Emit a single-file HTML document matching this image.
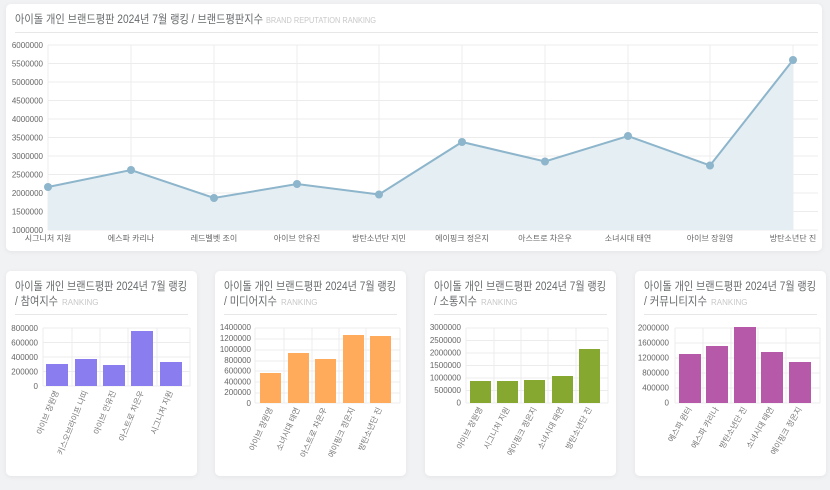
<!DOCTYPE html>
<html><head><meta charset="utf-8"><style>
html,body{margin:0;padding:0;background:#f1f2f4;width:830px;height:490px;overflow:hidden}
svg{display:block}
text{font-family:"Liberation Sans","Noto Sans CJK KR",sans-serif}
.t{font-size:11.5px;fill:#676a6c}
.s{font-size:8px;fill:#c8c8c8}
.y{font-size:8px;fill:#666;text-anchor:end}
.x{font-size:8px;fill:#666;text-anchor:middle}
.r{font-size:8px;fill:#777;text-anchor:end}
.g{stroke:#ececec;stroke-width:1}
</style></head><body>
<svg width="830" height="490" xmlns="http://www.w3.org/2000/svg">
<defs><filter id="sh" x="-5%" y="-5%" width="110%" height="110%"><feDropShadow dx="0" dy="1" stdDeviation="2" flood-color="#000" flood-opacity="0.06"/></filter></defs>
<rect x="6" y="4" width="816" height="247" rx="5" fill="#fff" filter="url(#sh)"/>
<rect x="6" y="271" width="191" height="205" rx="5" fill="#fff" filter="url(#sh)"/>
<rect x="215" y="271" width="191" height="205" rx="5" fill="#fff" filter="url(#sh)"/>
<rect x="425" y="271" width="191" height="205" rx="5" fill="#fff" filter="url(#sh)"/>
<rect x="635" y="271" width="191" height="205" rx="5" fill="#fff" filter="url(#sh)"/>

<text x="15" y="23" class="t" textLength="248" lengthAdjust="spacingAndGlyphs">아이돌 개인 브랜드평판 2024년 7월 랭킹 / 브랜드평판지수</text>
<text x="266" y="23" class="s" textLength="110" lengthAdjust="spacingAndGlyphs">BRAND REPUTATION RANKING</text>
<line x1="15" y1="32.5" x2="818" y2="32.5" stroke="#e7e7e7"/>
<g class="g">
<line x1="48" y1="45" x2="818" y2="45"/><line x1="48" y1="63.5" x2="818" y2="63.5"/><line x1="48" y1="82" x2="818" y2="82"/><line x1="48" y1="100.5" x2="818" y2="100.5"/><line x1="48" y1="119" x2="818" y2="119"/><line x1="48" y1="137.5" x2="818" y2="137.5"/><line x1="48" y1="156" x2="818" y2="156"/><line x1="48" y1="174.5" x2="818" y2="174.5"/><line x1="48" y1="193" x2="818" y2="193"/><line x1="48" y1="211.5" x2="818" y2="211.5"/><line x1="48" y1="230" x2="818" y2="230"/>
<line x1="48" y1="45" x2="48" y2="230"/><line x1="131" y1="45" x2="131" y2="230"/><line x1="214" y1="45" x2="214" y2="230"/><line x1="297" y1="45" x2="297" y2="230"/><line x1="379" y1="45" x2="379" y2="230"/><line x1="462" y1="45" x2="462" y2="230"/><line x1="545" y1="45" x2="545" y2="230"/><line x1="628" y1="45" x2="628" y2="230"/><line x1="710" y1="45" x2="710" y2="230"/><line x1="793" y1="45" x2="793" y2="230"/>
</g>
<g>
<text x="43" y="48" class="y">6000000</text><text x="43" y="66.5" class="y">5500000</text><text x="43" y="85" class="y">5000000</text><text x="43" y="103.5" class="y">4500000</text><text x="43" y="122" class="y">4000000</text><text x="43" y="140.5" class="y">3500000</text><text x="43" y="159" class="y">3000000</text><text x="43" y="177.5" class="y">2500000</text><text x="43" y="196" class="y">2000000</text><text x="43" y="214.5" class="y">1500000</text><text x="43" y="233" class="y">1000000</text>
</g>
<polygon points="48,230 48,187 131,170 214,198 297,184 379,194.5 462,142 545,161.5 628,136 710,165.5 793,60 793,230" fill="#e5eef3"/>
<polyline points="48,187 131,170 214,198 297,184 379,194.5 462,142 545,161.5 628,136 710,165.5 793,60" fill="none" stroke="#8db5cb" stroke-width="2"/>
<g fill="#8db5cb">
<circle cx="48" cy="187" r="4"/><circle cx="131" cy="170" r="4"/><circle cx="214" cy="198" r="4"/><circle cx="297" cy="184" r="4"/><circle cx="379" cy="194.5" r="4"/><circle cx="462" cy="142" r="4"/><circle cx="545" cy="161.5" r="4"/><circle cx="628" cy="136" r="4"/><circle cx="710" cy="165.5" r="4"/><circle cx="793" cy="60" r="4"/>
</g>
<g>
<text x="48" y="241" class="x">시그니처 지원</text><text x="131" y="241" class="x">에스파 카리나</text><text x="214" y="241" class="x">레드벨벳 조이</text><text x="297" y="241" class="x">아이브 안유진</text><text x="379" y="241" class="x">방탄소년단 지민</text><text x="462" y="241" class="x">에이핑크 정은지</text><text x="545" y="241" class="x">아스트로 차은우</text><text x="628" y="241" class="x">소녀시대 태연</text><text x="710" y="241" class="x">아이브 장원영</text><text x="793" y="241" class="x">방탄소년단 진</text>
</g>

<!-- card1 -->
<text x="15" y="290" class="t" textLength="172" lengthAdjust="spacingAndGlyphs">아이돌 개인 브랜드평판 2024년 7월 랭킹</text>
<text x="15" y="305" class="t" textLength="43" lengthAdjust="spacingAndGlyphs">/ 참여지수</text><text x="62" y="305" class="s">RANKING</text>
<line x1="15" y1="314.5" x2="188" y2="314.5" stroke="#e7e7e7"/>
<g class="g"><line x1="43" y1="328" x2="190" y2="328"/><line x1="43" y1="342.5" x2="190" y2="342.5"/><line x1="43" y1="357" x2="190" y2="357"/><line x1="43" y1="371.5" x2="190" y2="371.5"/><line x1="43" y1="386" x2="190" y2="386"/><line x1="43" y1="328" x2="43" y2="386"/><line x1="72" y1="328" x2="72" y2="386"/><line x1="100" y1="328" x2="100" y2="386"/><line x1="128" y1="328" x2="128" y2="386"/><line x1="157" y1="328" x2="157" y2="386"/><line x1="190" y1="328" x2="190" y2="386"/></g>
<text x="38" y="331" class="y">800000</text><text x="38" y="345.5" class="y">600000</text><text x="38" y="360" class="y">400000</text><text x="38" y="374.5" class="y">200000</text><text x="38" y="389" class="y">0</text>
<g fill="#8a7df0"><rect x="46" y="364" width="22" height="22"/><rect x="75" y="359" width="22" height="27"/><rect x="103" y="365" width="22" height="21"/><rect x="131" y="331" width="22" height="55"/><rect x="160" y="362" width="22" height="24"/></g>
<text class="r" transform="translate(59,392) rotate(-68)">아이브 장원영</text>
<text class="r" transform="translate(88,392) rotate(-68)">키스오브라이프 나띠</text>
<text class="r" transform="translate(116,392) rotate(-68)">아이브 안유진</text>
<text class="r" transform="translate(144,392) rotate(-68)">아스트로 차은우</text>
<text class="r" transform="translate(173,392) rotate(-68)">시그니처 지원</text>

<!-- card2 -->
<text x="224" y="290" class="t" textLength="172" lengthAdjust="spacingAndGlyphs">아이돌 개인 브랜드평판 2024년 7월 랭킹</text>
<text x="224" y="305" class="t" textLength="53" lengthAdjust="spacingAndGlyphs">/ 미디어지수</text><text x="281" y="305" class="s">RANKING</text>
<line x1="224" y1="314.5" x2="397" y2="314.5" stroke="#e7e7e7"/>
<g class="g"><line x1="255" y1="328" x2="400" y2="328"/><line x1="255" y1="339" x2="400" y2="339"/><line x1="255" y1="350" x2="400" y2="350"/><line x1="255" y1="361" x2="400" y2="361"/><line x1="255" y1="371" x2="400" y2="371"/><line x1="255" y1="382" x2="400" y2="382"/><line x1="255" y1="393" x2="400" y2="393"/><line x1="255" y1="403" x2="400" y2="403"/><line x1="255" y1="328" x2="255" y2="403"/><line x1="284" y1="328" x2="284" y2="403"/><line x1="312" y1="328" x2="312" y2="403"/><line x1="339" y1="328" x2="339" y2="403"/><line x1="366" y1="328" x2="366" y2="403"/><line x1="400" y1="328" x2="400" y2="403"/></g>
<text x="251" y="330" class="y">1400000</text><text x="251" y="341" class="y">1200000</text><text x="251" y="352" class="y">1000000</text><text x="251" y="363" class="y">800000</text><text x="251" y="373.5" class="y">600000</text><text x="251" y="384.5" class="y">400000</text><text x="251" y="395" class="y">200000</text><text x="251" y="406" class="y">0</text>
<g fill="#ffab5b"><rect x="260" y="373" width="21" height="30"/><rect x="288" y="353" width="21" height="50"/><rect x="315" y="359" width="21" height="44"/><rect x="343" y="335" width="21" height="68"/><rect x="370" y="336" width="21" height="67"/></g>
<text class="r" transform="translate(273,409) rotate(-66)">아이브 장원영</text>
<text class="r" transform="translate(300,409) rotate(-66)">소녀시대 태연</text>
<text class="r" transform="translate(327,409) rotate(-66)">아스트로 차은우</text>
<text class="r" transform="translate(355,409) rotate(-66)">에이핑크 정은지</text>
<text class="r" transform="translate(382,409) rotate(-66)">방탄소년단 진</text>

<!-- card3 -->
<text x="434" y="290" class="t" textLength="172" lengthAdjust="spacingAndGlyphs">아이돌 개인 브랜드평판 2024년 7월 랭킹</text>
<text x="434" y="305" class="t" textLength="43" lengthAdjust="spacingAndGlyphs">/ 소통지수</text><text x="481" y="305" class="s">RANKING</text>
<line x1="434" y1="314.5" x2="607" y2="314.5" stroke="#e7e7e7"/>
<g class="g"><line x1="466" y1="328" x2="608" y2="328"/><line x1="466" y1="340.5" x2="608" y2="340.5"/><line x1="466" y1="353" x2="608" y2="353"/><line x1="466" y1="365.5" x2="608" y2="365.5"/><line x1="466" y1="378" x2="608" y2="378"/><line x1="466" y1="390.5" x2="608" y2="390.5"/><line x1="466" y1="403" x2="608" y2="403"/><line x1="466" y1="328" x2="466" y2="403"/><line x1="494" y1="328" x2="494" y2="403"/><line x1="521" y1="328" x2="521" y2="403"/><line x1="548" y1="328" x2="548" y2="403"/><line x1="576" y1="328" x2="576" y2="403"/><line x1="608" y1="328" x2="608" y2="403"/></g>
<text x="461" y="330" class="y">3000000</text><text x="461" y="343" class="y">2500000</text><text x="461" y="355.5" class="y">2000000</text><text x="461" y="368" class="y">1500000</text><text x="461" y="380.5" class="y">1000000</text><text x="461" y="393" class="y">500000</text><text x="461" y="405.5" class="y">0</text>
<g fill="#86a830"><rect x="470" y="381" width="21" height="22"/><rect x="497" y="381" width="21" height="22"/><rect x="524" y="380" width="21" height="23"/><rect x="552" y="376" width="21" height="27"/><rect x="579" y="349" width="21" height="54"/></g>
<text class="r" transform="translate(483,409) rotate(-62)">아이브 장원영</text>
<text class="r" transform="translate(510,409) rotate(-62)">시그니처 지원</text>
<text class="r" transform="translate(537,409) rotate(-62)">에이핑크 정은지</text>
<text class="r" transform="translate(564,409) rotate(-62)">소녀시대 태연</text>
<text class="r" transform="translate(592,409) rotate(-62)">방탄소년단 진</text>

<!-- card4 -->
<text x="644" y="290" class="t" textLength="172" lengthAdjust="spacingAndGlyphs">아이돌 개인 브랜드평판 2024년 7월 랭킹</text>
<text x="644" y="305" class="t" textLength="63" lengthAdjust="spacingAndGlyphs">/ 커뮤니티지수</text><text x="711" y="305" class="s">RANKING</text>
<line x1="644" y1="314.5" x2="817" y2="314.5" stroke="#e7e7e7"/>
<g class="g"><line x1="675" y1="328" x2="820" y2="328"/><line x1="675" y1="343" x2="820" y2="343"/><line x1="675" y1="358" x2="820" y2="358"/><line x1="675" y1="373" x2="820" y2="373"/><line x1="675" y1="388" x2="820" y2="388"/><line x1="675" y1="403" x2="820" y2="403"/><line x1="675" y1="328" x2="675" y2="403"/><line x1="703" y1="328" x2="703" y2="403"/><line x1="731" y1="328" x2="731" y2="403"/><line x1="758" y1="328" x2="758" y2="403"/><line x1="786" y1="328" x2="786" y2="403"/><line x1="820" y1="328" x2="820" y2="403"/></g>
<text x="669" y="330.5" class="y">2000000</text><text x="669" y="345.5" class="y">1600000</text><text x="669" y="360.5" class="y">1200000</text><text x="669" y="375.5" class="y">800000</text><text x="669" y="390.5" class="y">400000</text><text x="669" y="405.5" class="y">0</text>
<g fill="#b659a8"><rect x="679" y="354" width="22" height="49"/><rect x="706" y="346" width="22" height="57"/><rect x="734" y="327" width="22" height="76"/><rect x="761" y="352" width="22" height="51"/><rect x="789" y="362" width="22" height="41"/></g>
<text class="r" transform="translate(692,409) rotate(-60)">에스파 윈터</text>
<text class="r" transform="translate(719,409) rotate(-60)">에스파 카리나</text>
<text class="r" transform="translate(747,409) rotate(-60)">방탄소년단 진</text>
<text class="r" transform="translate(774,409) rotate(-60)">소녀시대 태연</text>
<text class="r" transform="translate(802,409) rotate(-60)">에이핑크 정은지</text>
</svg>
</body></html>
